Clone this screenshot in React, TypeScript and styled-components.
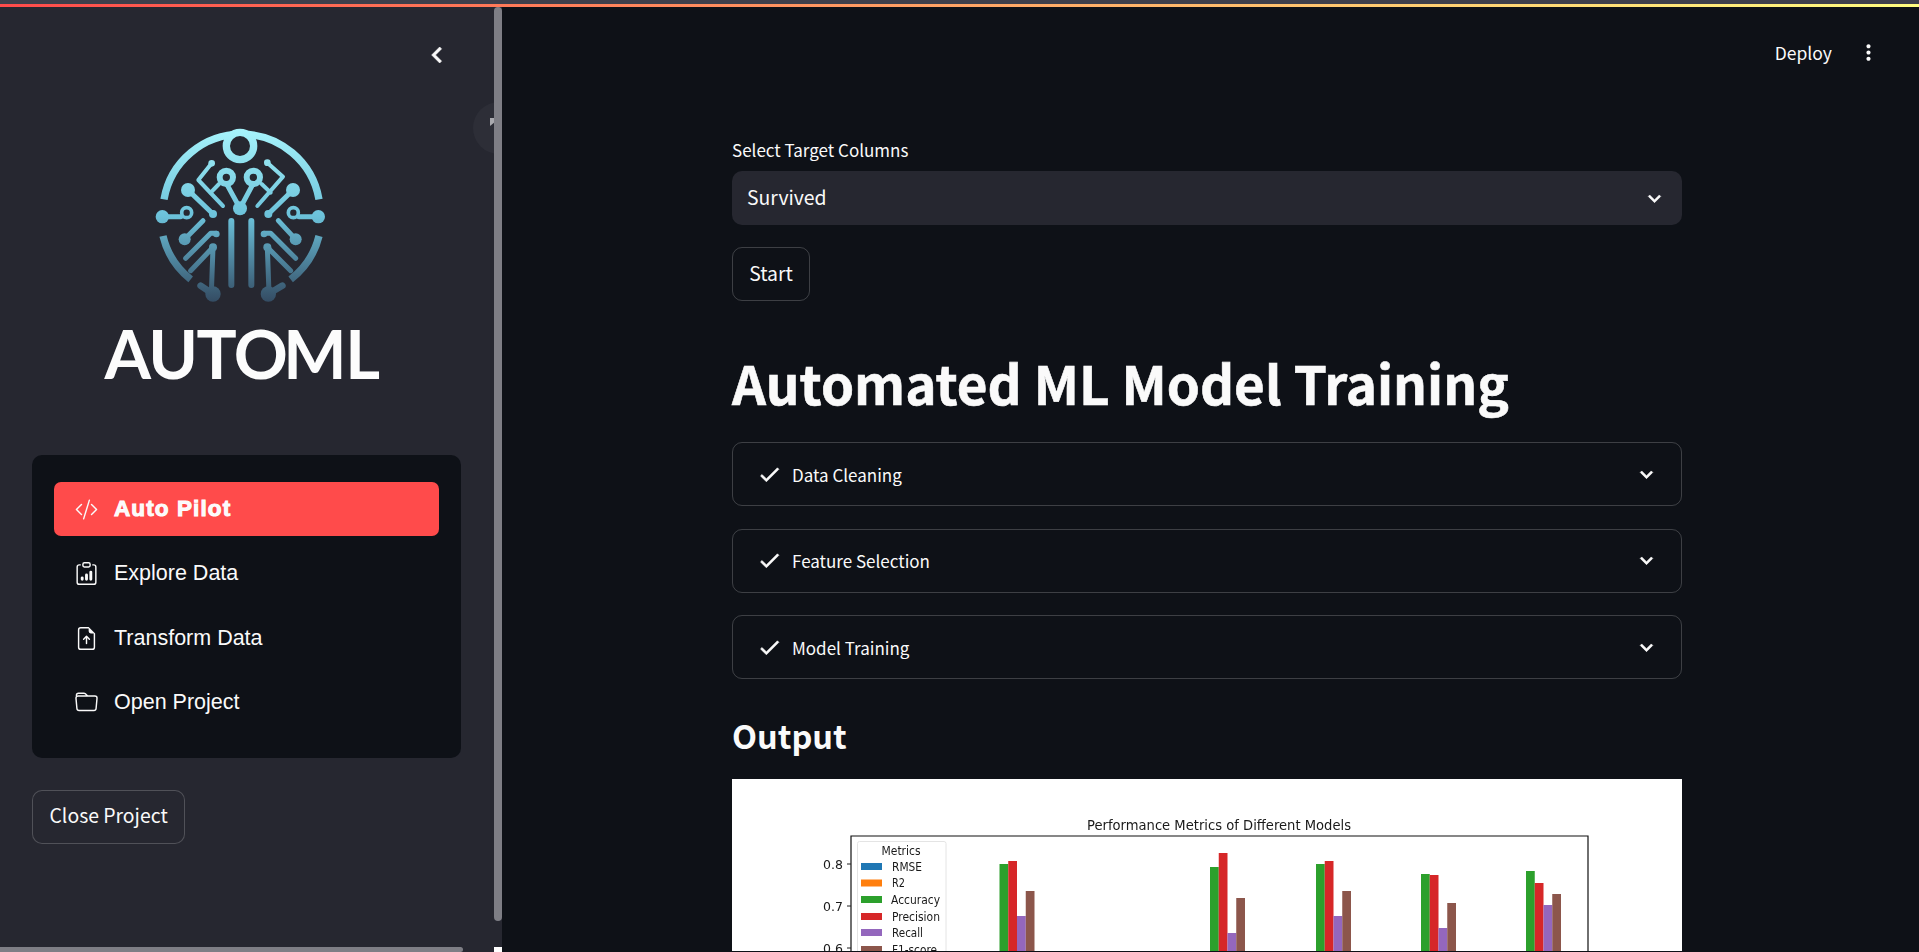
import React from 'react';
import styled, { createGlobalStyle } from 'styled-components';
import { BsClipboardData, BsCodeSlash, BsFileEarmarkArrowUp, BsFolder } from 'react-icons/bs';
import { MdCheck, MdChevronLeft, MdExpandMore, MdKeyboardArrowDown, MdMoreVert } from 'react-icons/md';

const GlobalStyle = createGlobalStyle`
  html, body {
    margin: 0;
    height: 100%;
    overflow: hidden;
    background: #0e1117;
    font-family: "Noto Sans CJK SC", "Noto Sans", sans-serif;
    color: #fafafa;
  }
`;

const Shell = styled.div`
  height: 952px;
  display: flex;
  flex-direction: column;
  overflow: hidden;
`;

const BrowserEdge = styled.div`
  height: 4px;
  flex: none;
  background: #3e3f4b;
`;

const Decoration = styled.div`
  height: 3px;
  flex: none;
  background: linear-gradient(90deg, #ff4b4b, #fffd80);
`;

const Columns = styled.div`
  flex: 1;
  min-height: 0;
  display: flex;
`;

const Sidebar = styled.aside`
  position: relative;
  width: 502px;
  flex: none;
  background: #262730;
  overflow: hidden;
  padding: 0 41px 0 32px;
  box-sizing: border-box;
`;

const CollapseRow = styled.div`
  height: 96px;
  display: flex;
  align-items: center;
  justify-content: flex-end;
  padding-right: 8px;
  font-size: 32px;
  color: #fafafa;
  svg { display: block; }
  svg path:not([fill='none']) { stroke: currentColor; stroke-width: 0.5; }
`;

const HoverGhost = styled.div`
  position: absolute;
  left: 473px;
  top: 95px;
  width: 52px;
  height: 52px;
  border-radius: 50%;
  background: #2d2e37;
  &::after {
    content: '';
    position: absolute;
    left: 17px;
    top: 16px;
    width: 4px;
    height: 8px;
    background: #a9a9ae;
    clip-path: polygon(0 0, 100% 0, 100% 60%, 0 100%);
  }
`;

const VerticalThumb = styled.div`
  position: absolute;
  left: 494px;
  top: 0;
  width: 8px;
  height: 914px;
  border-radius: 4px;
  background: #7e7e85;
`;

const HorizontalThumb = styled.div`
  position: absolute;
  left: 0;
  bottom: 0;
  width: 463px;
  height: 5px;
  border-radius: 0 3px 3px 0;
  background: #7e7e85;
`;

const ScrollCorner = styled.div`
  position: absolute;
  right: 0;
  bottom: 0;
  width: 8px;
  height: 5px;
  background: #fff;
`;

const LogoBlock = styled.div`
  display: flex;
  flex-direction: column;
  align-items: center;
  margin-left: 5px;
  height: 352px;
  padding-top: 17px;
  box-sizing: border-box;
`;

const LogoMark = styled.svg`
  width: 220px;
  height: 200px;
  display: block;
  flex: none;
`;

const LogoWord = styled.div`
  margin: 0 0 0 -15px;
  font-family: Lato, "Noto Sans", sans-serif;
  font-weight: 700;
  font-size: 67px;
  line-height: 67px;
  letter-spacing: -1.5px;
  color: #fcfcfc;
  white-space: nowrap;
  span { margin-left: -3px; }
`;

const NavPanel = styled.nav`
  background: #0e1117;
  border-radius: 10px;
  padding: 27px 22px 28px;
  display: flex;
  flex-direction: column;
  gap: 10.5px;
`;

const NavItem = styled.div<{ $active?: boolean }>`
  height: 54px;
  display: flex;
  align-items: center;
  gap: 16px;
  padding-left: 21px;
  border-radius: 7px;
  background: ${(p) => (p.$active ? '#ff4b4b' : 'transparent')};
  font-family: "Liberation Sans", Arial, sans-serif;
  font-size: ${(p) => (p.$active ? '22.5px' : '21.5px')};
  font-weight: ${(p) => (p.$active ? 700 : 400)};
  letter-spacing: ${(p) => (p.$active ? '1.1px' : '0')};
  -webkit-text-stroke: ${(p) => (p.$active ? '1px #fff' : '0')};
  color: #fafafa;
  svg { flex: none; width: 23px; height: 23px; display: block; }
`;

const GhostButton = styled.button<{ $surface?: string }>`
  display: block;
  height: 54px;
  padding: 0 16px 3px;
  box-sizing: border-box;
  border: 1px solid rgba(250, 250, 250, 0.2);
  border-radius: 10px;
  background: ${(p) => p.$surface ?? 'transparent'};
  color: #fafafa;
  font-family: inherit;
  font-size: 19.4px;
`;

const CloseButton = styled(GhostButton)`
  margin-top: 32px;
  padding: 0 16.5px 5px;
`;

const Main = styled.main`
  flex: 1;
  min-width: 0;
  display: flex;
  flex-direction: column;
  overflow: hidden;
`;

const TopBar = styled.header`
  height: 131px;
  flex: none;
  display: flex;
  justify-content: flex-end;
  align-items: flex-start;
  gap: 24px;
  padding: 33px 38px 0 0;
  box-sizing: border-box;
  font-size: 17.5px;
  line-height: 26px;
  svg { display: block; font-size: 25px; }
`;

const Content = styled.div`
  width: 950px;
  margin-left: 230px;
  display: flex;
  flex-direction: column;
`;

const FieldLabel = styled.label`
  font-size: 17px;
  line-height: 24px;
  margin-bottom: 9px;
`;

const SelectBox = styled.div`
  height: 54px;
  flex: none;
  display: flex;
  align-items: center;
  justify-content: space-between;
  padding: 0 15px 3px;
  box-sizing: border-box;
  border-radius: 10px;
  background: #262730;
  font-size: 19.4px;
  svg { font-size: 25px; display: block; margin-top: 3px; }
  svg path:not([fill='none']) { stroke: currentColor; stroke-width: 0.5; }
`;

const StartButton = styled(GhostButton)`
  margin-top: 22px;
  width: 78px;
  padding: 0 0 3px;
`;

const Title = styled.h1`
  margin: 34px 0 0;
  font-size: 53px;
  line-height: 94px;
  font-weight: 700;
  height: 107px;
  -webkit-text-stroke: 0.6px #fafafa;
  white-space: nowrap;
`;

const Expanders = styled.div`
  display: flex;
  flex-direction: column;
  gap: 22.5px;
`;

const Expander = styled.div`
  height: 64px;
  box-sizing: border-box;
  display: flex;
  align-items: center;
  gap: 10px;
  padding: 0 22px 0 24px;
  border: 1px solid rgba(250, 250, 250, 0.2);
  border-radius: 10px;
  font-size: 17px;
  svg { display: block; font-size: 25px; flex: none; }
  svg path:not([fill='none']) { stroke: currentColor; stroke-width: 0.6; }
  svg:last-child { margin-left: auto; }
`;

const Subtitle = styled.h2`
  margin: 29.5px 0 0;
  font-size: 32.5px;
  line-height: 52px;
  font-weight: 700;
  height: 70.5px;
`;

const ChartFrame = styled.div`
  height: 172px;
  flex: none;
  background: #fff;
  overflow: hidden;
  svg { display: block; filter: blur(0.35px); }
`;

const logoStrokes = [
  'M75 238 A236 236 0 0 1 540 238',
  'M72 348 A236 236 0 0 0 155 478',
  'M540 348 A236 236 0 0 1 455 478',
];

const logoThin = [
  'M218 130 L178 180 L252 258',
  'M385 128 L432 170 L355 258',
  'M215 218 L240 192',
  'M395 218 L368 192',
];

const logoMid = [
  'M70 290 H125',
  'M538 290 H480',
  'M147 210 L222 282',
  'M462 210 L388 282',
  'M303 265 L262 190',
  'M303 265 L343 190',
  'M137 358 L192 302',
  'M470 358 L418 302',
  'M140 415 L215 340 H232',
  'M470 415 L395 340 H375',
  'M155 452 L222 382 L217 520',
  'M455 452 L385 382 L390 520',
];

const logoDots: [number, number, number][] = [
  [70, 290, 20], [538, 290, 20], [147, 210, 21], [462, 210, 21],
  [222, 282, 12], [388, 282, 12], [303, 265, 21], [218, 130, 10], [385, 128, 10],
  [137, 358, 18], [470, 358, 18], [232, 342, 10], [375, 342, 10],
  [222, 382, 12], [385, 382, 12], [222, 522, 23], [388, 522, 23],
];

const logoRings: [number, number, number, number][] = [
  [303, 78, 41, 22], [262, 172, 20, 18], [343, 172, 20, 18], [143, 278, 15, 11], [463, 278, 15, 11],
];

function AutomlMark() {
  return (
    <LogoMark viewBox="0 0 660 600">
      <defs>
        <linearGradient id="mark" gradientUnits="userSpaceOnUse" x1="0" y1="30" x2="0" y2="545">
          <stop offset="0" stopColor="#a6f3fb" />
          <stop offset="0.5" stopColor="#6cc2da" />
          <stop offset="0.75" stopColor="#4f869f" />
          <stop offset="1" stopColor="#344c63" />
        </linearGradient>
      </defs>
      <g fill="none" stroke="url(#mark)">
        {logoStrokes.map((d) => <path key={d} d={d} strokeWidth={22} />)}
        {logoThin.map((d) => <path key={d} d={d} strokeWidth={12} strokeLinecap="round" strokeLinejoin="round" />)}
        {logoMid.map((d) => <path key={d} d={d} strokeWidth={15} strokeLinecap="round" strokeLinejoin="round" />)}
        <path d="M277 303 V495 M337 303 V495" strokeWidth={18} strokeLinecap="round" />
        <path d="M185 497 L222 522 M430 497 L388 522" strokeWidth={20} strokeLinecap="round" />
        {logoRings.map(([x, y, r, w]) => <circle key={`${x}-${y}`} cx={x} cy={y} r={r} strokeWidth={w} fill="#262730" />)}
      </g>
      <g fill="url(#mark)">
        {logoDots.map(([x, y, r]) => <circle key={`${x}-${y}`} cx={x} cy={y} r={r} />)}
      </g>
    </LogoMark>
  );
}

const barGroups = [
  { x: 999.5, tops: [864, 861, 916, 891] },
  { x: 1210, tops: [867, 853, 933, 898] },
  { x: 1316, tops: [864, 861, 916, 891] },
  { x: 1421, tops: [874, 875, 928, 903] },
  { x: 1526, tops: [871, 883, 905, 894] },
];

const barColors = ['#2ca02c', '#d62728', '#9467bd', '#8c564b'];

const legendRows = [
  { label: 'RMSE', color: '#1f77b4', y: 866, x: 892, width: 30 },
  { label: 'R2', color: '#ff7f0e', y: 882.5, x: 892, width: 13 },
  { label: 'Accuracy', color: '#2ca02c', y: 899, x: 891, width: 49 },
  { label: 'Precision', color: '#d62728', y: 916, x: 892, width: 48 },
  { label: 'Recall', color: '#9467bd', y: 932, x: 892, width: 31 },
  { label: 'F1-score', color: '#8c564b', y: 949, x: 892, width: 45 },
];

const yTicks = [
  { label: '0.8', y: 864 },
  { label: '0.7', y: 906 },
  { label: '0.6', y: 948 },
];

// chart coordinates are page pixels, the viewBox starts where the picture starts
function MetricsChart() {
  return (
    <svg width="950" height="172" viewBox="732 779 950 172" fontFamily="DejaVu Sans, sans-serif" fill="#1a1a1a">
      <text x="1087" y="830" fontSize="14" textLength="264" lengthAdjust="spacingAndGlyphs">
        Performance Metrics of Different Models
      </text>
      <path d="M851 960 V836 H1588 V960" fill="none" stroke="#111" strokeWidth="1.2" />
      {yTicks.map((t) => (
        <g key={t.label}>
          <path d={`M847 ${t.y} H851`} stroke="#222" strokeWidth="1" />
          <text x="843" y={t.y + 4.5} fontSize="12.5" textAnchor="end">{t.label}</text>
        </g>
      ))}
      <rect x="857.5" y="841.5" width="88.5" height="130" rx="2" fill="#fff" stroke="#e4e4e4" strokeWidth="1" />
      <text x="901" y="854.5" fontSize="12.5" textAnchor="middle" textLength="39" lengthAdjust="spacingAndGlyphs">Metrics</text>
      {legendRows.map((r) => (
        <g key={r.label}>
          <rect x="861" y={r.y - 3} width="21" height="7" fill={r.color} />
          <text x={r.x} y={r.y + 4.5} fontSize="12.5" textLength={r.width} lengthAdjust="spacingAndGlyphs">{r.label}</text>
        </g>
      ))}
      {barGroups.map((g) =>
        g.tops.map((top, i) => (
          <rect key={`${g.x}-${i}`} x={g.x + i * 8.75} y={top} width="8.75" height={960 - top} fill={barColors[i]} />
        )),
      )}
    </svg>
  );
}

const navItems = [
  { label: 'Auto Pilot', icon: <BsCodeSlash />, active: true },
  { label: 'Explore Data', icon: <BsClipboardData /> },
  { label: 'Transform Data', icon: <BsFileEarmarkArrowUp /> },
  { label: 'Open Project', icon: <BsFolder /> },
];

const steps = ['Data Cleaning', 'Feature Selection', 'Model Training'];

export default function App() {
  return (
    <Shell>
      <GlobalStyle />
      <BrowserEdge />
      <Decoration />
      <Columns>
        <Sidebar>
          <CollapseRow>
            <MdChevronLeft />
          </CollapseRow>
          <LogoBlock>
            <AutomlMark />
            <LogoWord>AUTO<span>M</span>L</LogoWord>
          </LogoBlock>
          <NavPanel>
            {navItems.map((item) => (
              <NavItem key={item.label} $active={item.active}>
                {item.icon}
                {item.label}
              </NavItem>
            ))}
          </NavPanel>
          <CloseButton $surface="#262730">Close Project</CloseButton>
          <HoverGhost />
          <VerticalThumb />
          <HorizontalThumb />
          <ScrollCorner />
        </Sidebar>
        <Main>
          <TopBar>
            <span>Deploy</span>
            <MdMoreVert />
          </TopBar>
          <Content>
            <FieldLabel>Select Target Columns</FieldLabel>
            <SelectBox>
              Survived
              <MdKeyboardArrowDown />
            </SelectBox>
            <StartButton>Start</StartButton>
            <Title>Automated ML Model Training</Title>
            <Expanders>
              {steps.map((step) => (
                <Expander key={step}>
                  <MdCheck />
                  {step}
                  <MdExpandMore />
                </Expander>
              ))}
            </Expanders>
            <Subtitle>Output</Subtitle>
            <ChartFrame>
              <MetricsChart />
            </ChartFrame>
          </Content>
        </Main>
      </Columns>
    </Shell>
  );
}
